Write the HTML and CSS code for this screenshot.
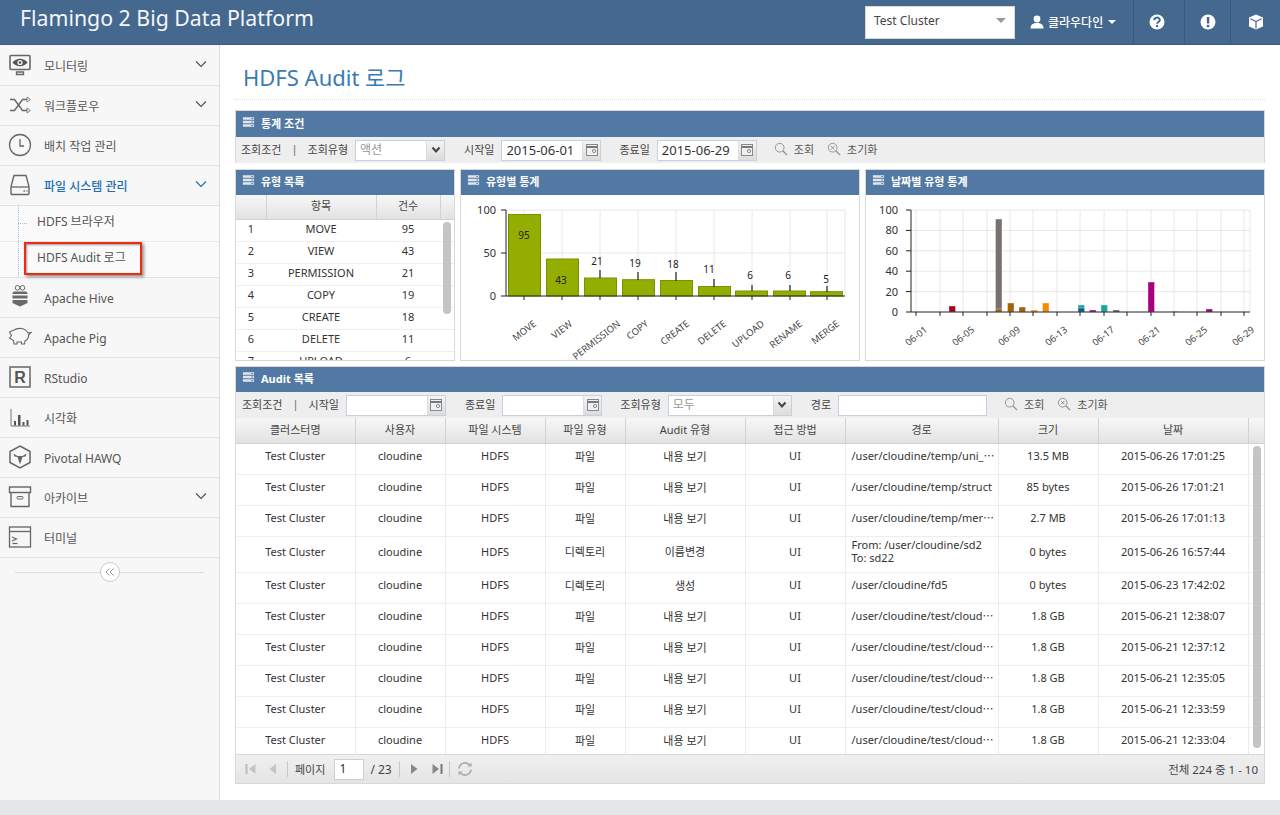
FILE: index.html
```html
<!DOCTYPE html>
<html lang="ko">
<head>
<meta charset="utf-8">
<title>HDFS Audit 로그</title>
<link rel="stylesheet" href="styles.css">
</head>
<body>
<svg class="sprite" xmlns="http://www.w3.org/2000/svg">
  <symbol id="i-head" viewBox="0 0 14 12"><path d="M1 1h12v2.600H1zM1 4.700h12v2.600H1zM1 8.400h12V11H1z" fill="#dfe6ee"/><path d="M10 2.300h2M10 6h2M10 9.700h2" stroke="#5279a3"/></symbol>
  <symbol id="i-chev" viewBox="0 0 12 8"><path d="M1 1.500l5 5 5-5" fill="none" stroke="currentColor" stroke-width="1.200"/></symbol>
  <symbol id="i-cal" viewBox="0 0 14 14"><rect x="1.500" y="1.500" width="11" height="11" fill="#eef1f4" stroke="#888"/><path d="M1.500 4h11" stroke="#777" stroke-width="2"/><circle cx="9" cy="8" r="1.600" fill="none" stroke="#888"/></symbol>
  <symbol id="i-down" viewBox="0 0 10 8"><path d="M1.500 1.500L5 5.500l3.500-4" fill="none" stroke="#444" stroke-width="2"/></symbol>
  <symbol id="i-search" viewBox="0 0 16 16"><circle cx="6.500" cy="6.500" r="5" fill="none" stroke="#8a8a8a"/><path d="M10 10l5 5" stroke="#8a8a8a" stroke-width="1.300"/></symbol>
  <symbol id="i-reset" viewBox="0 0 16 16"><circle cx="6.500" cy="6.500" r="5" fill="none" stroke="#8a8a8a"/><path d="M10 10l5 5" stroke="#8a8a8a" stroke-width="1.300"/><path d="M4.500 4.500l4 4M8.500 4.500l-4 4" stroke="#8a8a8a"/></symbol>
</svg>

<header class="topbar">
  <div class="brand">Flamingo 2 Big Data Platform</div>
  <div class="cluster"><span>Test Cluster</span><i class="caret-gray"></i></div>
  <div class="user">
    <svg class="user-icon" viewBox="0 0 14 14"><circle cx="7" cy="4" r="3.400" fill="#fff"/><path d="M0.500 13.500c0-4 2.500-5.500 6.500-5.500s6.500 1.500 6.500 5.500z" fill="#fff"/></svg>
    <span>클라우다인</span><i class="caret-white"></i>
  </div>
  <div class="tbtn tbtn-help"><svg viewBox="0 0 16 16"><circle cx="8" cy="8" r="7.500" fill="#fff"/><path d="M5.300 6.200c0-3.400 5.500-3.400 5.500-.2 0 2-2.700 1.900-2.700 3.700" fill="none" stroke="#45688f" stroke-width="2"/><rect x="7" y="11" width="2.100" height="2.100" fill="#45688f"/></svg></div>
  <div class="tbtn tbtn-alert"><svg viewBox="0 0 16 16"><circle cx="8" cy="8" r="7.500" fill="#fff"/><rect x="6.800" y="3" width="2.500" height="6.500" fill="#45688f"/><rect x="6.800" y="10.800" width="2.500" height="2.400" fill="#45688f"/></svg></div>
  <div class="tbtn tbtn-cube"><svg viewBox="0 0 16 16"><path d="M8 .5l7 3v9l-7 3-7-3v-9z" fill="#fff"/><path d="M8 7.500v7M8 7.500L2.300 4.800M8 7.500l5.700-2.700" stroke="#45688f" stroke-width="1.200" fill="none"/></svg></div>
</header>

<div class="layout">
  <nav class="sidebar">
    <a class="nav-item"><svg class="nav-icon" viewBox="0 0 24 24"><rect x="2" y="2.500" width="20" height="14" rx="1" fill="none" stroke="#666" stroke-width="1.600"/><path d="M4.500 9.500c4-5 11-5 15 0-4 5-11 5-15 0z" fill="#555"/><circle cx="12" cy="9.500" r="2.600" fill="#f7f7f7"/><circle cx="12" cy="9.500" r="1.300" fill="#555"/><path d="M8.500 19h7v2.500h-7z" fill="none" stroke="#666" stroke-width="1.300"/></svg><span class="nav-label">모니터링</span><svg class="nav-chev"><use href="#i-chev"/></svg></a>
    <a class="nav-item"><svg class="nav-icon" viewBox="0 0 24 24"><path d="M2 6.500h4.500l8 11H19M2 17.500h4.500l8-11H19" fill="none" stroke="#666" stroke-width="1.400"/><path d="M19 4l3.500 2.500L19 9zM19 15l3.500 2.500L19 20z" fill="none" stroke="#777" stroke-width=".9"/></svg><span class="nav-label">워크플로우</span><svg class="nav-chev"><use href="#i-chev"/></svg></a>
    <a class="nav-item"><svg class="nav-icon" viewBox="0 0 24 24"><circle cx="12" cy="12" r="10.500" fill="none" stroke="#666" stroke-width="1.300"/><path d="M12 6v7h4" fill="none" stroke="#666" stroke-width="1.300"/></svg><span class="nav-label">배치 작업 관리</span></a>
    <a class="nav-item nav-active"><svg class="nav-icon" viewBox="0 0 24 24"><path d="M6 2.500h12l3 11v7a1 1 0 0 1-1 1H4a1 1 0 0 1-1-1v-7z" fill="none" stroke="#666" stroke-width="1.400"/><path d="M3 14h18" stroke="#666" stroke-width="1.300"/><path d="M15.500 18h1.500M18.500 18h1" stroke="#666" stroke-width="1.300"/></svg><span class="nav-label">파일 시스템 관리</span><svg class="nav-chev"><use href="#i-chev"/></svg></a>
    <div class="subnav">
      <a class="sub-item">HDFS 브라우저</a>
      <a class="sub-item sub-current">HDFS Audit 로그<span class="callout"></span></a>
    </div>
    <a class="nav-item"><svg class="nav-icon" viewBox="0 0 24 24"><circle cx="9.500" cy="2.800" r="2.300" fill="none" stroke="#666"/><circle cx="14.500" cy="2.800" r="2.300" fill="none" stroke="#666"/><path d="M6.500 6.500h11a2 2 0 0 1 2 2v.5h-15v-.5a2 2 0 0 1 2-2zM4.500 10.500h15v3h-15zM4.500 15h15v3l-7.500 3.500L4.500 18z" fill="#6a6a6a"/></svg><span class="nav-label">Apache Hive</span></a>
    <a class="nav-item"><svg class="nav-icon" viewBox="0 0 24 24"><path d="M6 5c4-2.500 11-2.500 14 3l3-.5-2.500 2.500c.5 3-2 5.500-3.500 6l-.5 3h-3v-2H9v2H6l-.5-3.500L1.500 13l2-2.500L1.500 7z" fill="none" stroke="#666" stroke-width="1.100"/></svg><span class="nav-label">Apache Pig</span></a>
    <a class="nav-item"><svg class="nav-icon" viewBox="0 0 24 24"><rect x="2" y="2" width="20" height="20" fill="none" stroke="#666" stroke-width="1.500"/><text x="12" y="17.500" class="icon-r">R</text></svg><span class="nav-label">RStudio</span></a>
    <a class="nav-item"><svg class="nav-icon" viewBox="0 0 24 24"><path d="M3 4v17h19" fill="none" stroke="#777"/><path d="M6 16h2v4.500H6zM10 10h2.500v10.500H10zM14.500 17h2v3.500h-2zM18.500 15h2v5.500h-2z" fill="#555"/></svg><span class="nav-label">시각화</span></a>
    <a class="nav-item"><svg class="nav-icon" viewBox="0 0 24 24"><path d="M12 1l10 5.500v11L12 23 2 17.500v-11z" fill="none" stroke="#666" stroke-width="1.500"/><path d="M5.500 8.500l4 2.500h5l4-2.500-1 3-3 .5-2.500 7.500L9.500 12l-3-.5z" fill="#666"/></svg><span class="nav-label">Pivotal HAWQ</span></a>
    <a class="nav-item"><svg class="nav-icon" viewBox="0 0 24 24"><rect x="1.500" y="2" width="21" height="5.500" fill="none" stroke="#666" stroke-width="1.400"/><path d="M3 7.500v14h18v-14" fill="none" stroke="#666" stroke-width="1.400"/><rect x="9" y="11.500" width="6" height="2.500" rx="1" fill="none" stroke="#666"/></svg><span class="nav-label">아카이브</span><svg class="nav-chev"><use href="#i-chev"/></svg></a>
    <a class="nav-item"><svg class="nav-icon" viewBox="0 0 24 24"><rect x="1.500" y="2" width="21" height="20" fill="none" stroke="#666" stroke-width="1.300"/><path d="M1.500 6.500h21" stroke="#666" stroke-width="1.300"/><path d="M4 12l4.500 2L4 16" fill="none" stroke="#666" stroke-width="1.200"/><path d="M4.500 18.500h5" stroke="#666" stroke-width="1.200"/></svg><span class="nav-label">터미널</span></a>
    <div class="collapse"><span class="collapse-btn"><svg viewBox="0 0 10 10"><path d="M4.500 1.500L1 5l3.500 3.500M8.500 1.500L5 5l3.500 3.500" fill="none" stroke="#888" stroke-width=".9"/></svg></span></div>
  </nav>

  <main class="main">
    <h1 class="page-title">HDFS Audit 로그</h1>

    <section class="panel panel-cond">
      <h2 class="panel-head"><svg class="head-icon"><use href="#i-head"/></svg>통계 조건</h2>
      <div class="toolbar tb-stats">
        <span>조회조건</span><span class="pipe">|</span><span>조회유형</span>
        <div class="select select-sm"><span>액션</span><b><svg><use href="#i-down"/></svg></b></div>
        <span class="gap-19">시작일</span>
        <div class="input date"><span>2015-06-01</span><b><svg><use href="#i-cal"/></svg></b></div>
        <span class="gap-18">종료일</span>
        <div class="input date"><span>2015-06-29</span><b><svg><use href="#i-cal"/></svg></b></div>
        <span class="tool tool-first"><svg><use href="#i-search"/></svg>조회</span>
        <span class="tool"><svg><use href="#i-reset"/></svg>초기화</span>
      </div>
    </section>

    <div class="stats-row">
      <section class="panel">
        <h2 class="panel-head"><svg class="head-icon"><use href="#i-head"/></svg>유형 목록</h2>
        <div class="panel-body type-grid">
          <table class="grid grid-types">
            <colgroup><col class="c-num"><col class="c-name"><col class="c-count"><col></colgroup>
            <thead><tr><th></th><th>항목</th><th>건수</th><th></th></tr></thead>
            <tbody>
              <tr><td>1</td><td>MOVE</td><td>95</td><td></td></tr>
              <tr><td>2</td><td>VIEW</td><td>43</td><td></td></tr>
              <tr><td>3</td><td>PERMISSION</td><td>21</td><td></td></tr>
              <tr><td>4</td><td>COPY</td><td>19</td><td></td></tr>
              <tr><td>5</td><td>CREATE</td><td>18</td><td></td></tr>
              <tr><td>6</td><td>DELETE</td><td>11</td><td></td></tr>
              <tr><td>7</td><td>UPLOAD</td><td>6</td><td></td></tr>
            </tbody>
          </table>
          <span class="thumb thumb-types"></span>
        </div>
      </section>

      <section class="panel">
        <h2 class="panel-head"><svg class="head-icon"><use href="#i-head"/></svg>유형별 통계</h2>
        <div class="panel-body">
          <svg class="chart" viewBox="461 195 398 165">
            <g class="gridlines">
              <path d="M506 210H845M506 253H845"/>
              <path d="M524 210V296M562 210V296M600 210V296M638 210V296M676 210V296M714 210V296M752 210V296M790 210V296M827 210V296M845 210V296"/>
            </g>
            <g class="bars">
              <rect x="508.500" y="214.500" width="32" height="81.500"/>
              <rect x="546.500" y="259" width="32" height="37"/>
              <rect x="584.500" y="278" width="32" height="18"/>
              <rect x="622.500" y="279.700" width="32" height="16.300"/>
              <rect x="660.500" y="280.500" width="32" height="15.500"/>
              <rect x="698.500" y="286.500" width="32" height="9.500"/>
              <rect x="735.500" y="291" width="32" height="5"/>
              <rect x="773.500" y="291" width="32" height="5"/>
              <rect x="810.500" y="291.700" width="32" height="4.300"/>
            </g>
            <path class="axis" d="M506 210V296H845M501 210H506M501 253H506M501 296H506M524 296V300M562 296V300M600 296V300M638 296V300M676 296V300M714 296V300M752 296V300M790 296V300M827 296V300"/>
            <path class="leader" d="M600 270V278M638 272V280M676 272V281M714 279V287M752 285V291M790 285V291M827 286V292"/>
            <g class="ylabels">
              <text x="496" y="214">100</text><text x="496" y="257">50</text><text x="496" y="300">0</text>
            </g>
            <g class="vlabels">
              <text x="524" y="239">95</text><text x="561" y="284">43</text><text x="597" y="265">21</text><text x="635" y="267">19</text><text x="673" y="268">18</text><text x="709" y="273">11</text><text x="750" y="279">6</text><text x="788" y="279">6</text><text x="826" y="283">5</text>
            </g>
            <g class="xlabels">
              <text transform="translate(537 325) rotate(-38)">MOVE</text>
              <text transform="translate(573 325) rotate(-38)">VIEW</text>
              <text transform="translate(621 325) rotate(-38)">PERMISSION</text>
              <text transform="translate(649 325) rotate(-38)">COPY</text>
              <text transform="translate(690 325) rotate(-38)">CREATE</text>
              <text transform="translate(727 325) rotate(-38)">DELETE</text>
              <text transform="translate(765 325) rotate(-38)">UPLOAD</text>
              <text transform="translate(803 325) rotate(-38)">RENAME</text>
              <text transform="translate(840 325) rotate(-38)">MERGE</text>
            </g>
          </svg>
        </div>
      </section>

      <section class="panel">
        <h2 class="panel-head"><svg class="head-icon"><use href="#i-head"/></svg>날짜별 유형 통계</h2>
        <div class="panel-body">
          <svg class="chart" viewBox="866 195 398 165">
            <g class="gridlines">
              <path d="M911 210H1250M911 230.400H1250M911 250.800H1250M911 271.200H1250M911 291.600H1250M1250 210V312"/>
              <path d="M916 210V312M940 210V312M963 210V312M987 210V312M1010 210V312M1033 210V312M1057 210V312M1080 210V312M1104 210V312M1127 210V312M1151 210V312M1174 210V312M1197 210V312M1221 210V312M1244 210V312"/>
            </g>
            <g class="minibars">
              <rect x="949" y="306" width="6.500" height="6" fill="#a8001e"/>
              <rect x="995.500" y="219" width="6.500" height="93" fill="#7b7070"/>
              <rect x="995.500" y="309" width="6.500" height="3" fill="#a8620a"/>
              <rect x="1007.500" y="303" width="6.500" height="9" fill="#a46406"/>
              <rect x="1019" y="307" width="6.500" height="5" fill="#a46406"/>
              <rect x="1031" y="310" width="6.500" height="2" fill="#f38b00"/>
              <rect x="1042.500" y="303" width="6.500" height="9" fill="#f38b00"/>
              <rect x="1078" y="305" width="6.500" height="7" fill="#17a79a"/>
              <rect x="1078" y="308" width="6.500" height="4" fill="#0d5c9c"/>
              <rect x="1089.500" y="310" width="6.500" height="2" fill="#a8007f"/>
              <rect x="1101" y="305" width="6.500" height="7" fill="#17a79a"/>
              <rect x="1113" y="310" width="6.500" height="2" fill="#56606a"/>
              <rect x="1148" y="282" width="6.500" height="30" fill="#a8007f"/>
              <rect x="1171.500" y="311" width="6.500" height="1" fill="#f3b070"/>
              <rect x="1206" y="309" width="6.500" height="3" fill="#8c0a80"/>
            </g>
            <path class="axis" d="M911 210V312H1250M906 210H911M906 230.400H911M906 250.800H911M906 271.200H911M906 291.600H911M906 312H911M916 312V316M940 312V316M963 312V316M987 312V316M1010 312V316M1033 312V316M1057 312V316M1080 312V316M1104 312V316M1127 312V316M1151 312V316M1174 312V316M1197 312V316M1221 312V316M1244 312V316"/>
            <g class="ylabels">
              <text x="898" y="214">100</text><text x="898" y="234.400">80</text><text x="898" y="254.800">60</text><text x="898" y="275.200">40</text><text x="898" y="295.600">20</text><text x="898" y="316">0</text>
            </g>
            <g class="xlabels">
              <text transform="translate(928 331) rotate(-38)">06-01</text>
              <text transform="translate(975 331) rotate(-38)">06-05</text>
              <text transform="translate(1021 331) rotate(-38)">06-09</text>
              <text transform="translate(1068 331) rotate(-38)">06-13</text>
              <text transform="translate(1115 331) rotate(-38)">06-17</text>
              <text transform="translate(1161 331) rotate(-38)">06-21</text>
              <text transform="translate(1208 331) rotate(-38)">06-25</text>
              <text transform="translate(1255 331) rotate(-38)">06-29</text>
            </g>
          </svg>
        </div>
      </section>
    </div>

    <section class="panel panel-audit">
      <h2 class="panel-head"><svg class="head-icon"><use href="#i-head"/></svg>Audit 목록</h2>
      <div class="toolbar tb-audit">
        <span>조회조건</span><span class="pipe">|</span><span>시작일</span>
        <div class="input date"><span></span><b><svg><use href="#i-cal"/></svg></b></div>
        <span class="gap-19">종료일</span>
        <div class="input date"><span></span><b><svg><use href="#i-cal"/></svg></b></div>
        <span class="gap-18">조회유형</span>
        <div class="select select-lg"><span>모두</span><b><svg><use href="#i-down"/></svg></b></div>
        <span class="gap-19">경로</span>
        <div class="input path"></div>
        <span class="tool tool-first"><svg><use href="#i-search"/></svg>조회</span>
        <span class="tool"><svg><use href="#i-reset"/></svg>초기화</span>
      </div>
      <div class="audit-grid">
        <table class="grid grid-audit">
          <colgroup><col class="w119"><col class="w90"><col class="w100"><col class="w80"><col class="w120"><col class="w100"><col class="w153"><col class="w100"><col class="w150"><col></colgroup>
          <thead><tr><th>클러스터명</th><th>사용자</th><th>파일 시스템</th><th>파일 유형</th><th>Audit 유형</th><th>접근 방법</th><th>경로</th><th>크기</th><th>날짜</th><th></th></tr></thead>
          <tbody>
            <tr><td>Test Cluster</td><td>cloudine</td><td>HDFS</td><td>파일</td><td>내용 보기</td><td>UI</td><td class="path-cell">/user/cloudine/temp/uni_⋯</td><td>13.5 MB</td><td>2015-06-26 17:01:25</td><td></td></tr>
            <tr><td>Test Cluster</td><td>cloudine</td><td>HDFS</td><td>파일</td><td>내용 보기</td><td>UI</td><td class="path-cell">/user/cloudine/temp/struct</td><td>85 bytes</td><td>2015-06-26 17:01:21</td><td></td></tr>
            <tr><td>Test Cluster</td><td>cloudine</td><td>HDFS</td><td>파일</td><td>내용 보기</td><td>UI</td><td class="path-cell">/user/cloudine/temp/mer⋯</td><td>2.7 MB</td><td>2015-06-26 17:01:13</td><td></td></tr>
            <tr class="row-tall"><td>Test Cluster</td><td>cloudine</td><td>HDFS</td><td>디렉토리</td><td>이름변경</td><td>UI</td><td class="path-cell">From: /user/cloudine/sd2<br>To: sd22</td><td>0 bytes</td><td>2015-06-26 16:57:44</td><td></td></tr>
            <tr><td>Test Cluster</td><td>cloudine</td><td>HDFS</td><td>디렉토리</td><td>생성</td><td>UI</td><td class="path-cell">/user/cloudine/fd5</td><td>0 bytes</td><td>2015-06-23 17:42:02</td><td></td></tr>
            <tr><td>Test Cluster</td><td>cloudine</td><td>HDFS</td><td>파일</td><td>내용 보기</td><td>UI</td><td class="path-cell">/user/cloudine/test/cloud⋯</td><td>1.8 GB</td><td>2015-06-21 12:38:07</td><td></td></tr>
            <tr><td>Test Cluster</td><td>cloudine</td><td>HDFS</td><td>파일</td><td>내용 보기</td><td>UI</td><td class="path-cell">/user/cloudine/test/cloud⋯</td><td>1.8 GB</td><td>2015-06-21 12:37:12</td><td></td></tr>
            <tr><td>Test Cluster</td><td>cloudine</td><td>HDFS</td><td>파일</td><td>내용 보기</td><td>UI</td><td class="path-cell">/user/cloudine/test/cloud⋯</td><td>1.8 GB</td><td>2015-06-21 12:35:05</td><td></td></tr>
            <tr><td>Test Cluster</td><td>cloudine</td><td>HDFS</td><td>파일</td><td>내용 보기</td><td>UI</td><td class="path-cell">/user/cloudine/test/cloud⋯</td><td>1.8 GB</td><td>2015-06-21 12:33:59</td><td></td></tr>
            <tr><td>Test Cluster</td><td>cloudine</td><td>HDFS</td><td>파일</td><td>내용 보기</td><td>UI</td><td class="path-cell">/user/cloudine/test/cloud⋯</td><td>1.8 GB</td><td>2015-06-21 12:33:04</td><td></td></tr>
          </tbody>
        </table>
        <span class="thumb thumb-audit"></span>
      </div>
      <div class="pager">
        <svg class="pg pg-first" viewBox="0 0 12 12"><path d="M1.500 1v10" stroke="#bbb" stroke-width="2"/><path d="M10.500 1L4 6l6.500 5z" fill="#c4c4c4"/></svg>
        <svg class="pg pg-prev" viewBox="0 0 12 12"><path d="M9 1L2.500 6 9 11z" fill="#c4c4c4"/></svg>
        <i class="sep sep-a"></i>
        <span class="pg-label">페이지</span>
        <span class="pg-input">1</span>
        <span class="pg-total">/ 23</span>
        <i class="sep sep-b"></i>
        <svg class="pg pg-next" viewBox="0 0 12 12"><path d="M3 1l6.500 5L3 11z" fill="#888"/></svg>
        <svg class="pg pg-last" viewBox="0 0 12 12"><path d="M1.500 1L8 6l-6.500 5z" fill="#888"/><path d="M10.500 1v10" stroke="#777" stroke-width="2"/></svg>
        <i class="sep sep-c"></i>
        <svg class="pg pg-refresh" viewBox="0 0 16 16"><path d="M2 7.500A6 6 0 0 1 12.500 4M14 8.500A6 6 0 0 1 3.500 12" fill="none" stroke="#aaa" stroke-width="1.600"/><path d="M10.500 5.500h4v-4zM5.500 10.500h-4v4z" fill="#aaa"/></svg>
        <span class="pg-summary">전체 224 중 1 - 10</span>
      </div>
    </section>
  </main>
</div>
<div class="foot"></div>
</body>
</html>
```

FILE: styles.css
```css
* { box-sizing: border-box; }
html, body { margin: 0; padding: 0; }
body {
  width: 1280px;
  height: 815px;
  overflow: hidden;
  display: flex;
  flex-direction: column;
  background: #fff;
  color: #333;
  font-family: "Noto Sans", "Noto Sans CJK KR", sans-serif;
  font-size: 12px;
}
.sprite { display: none; }

/* top bar */
.topbar {
  flex: 0 0 45px;
  display: flex;
  align-items: stretch;
  background: #45688f;
  color: #fff;
  border-bottom: 1px solid #3c5d83;
}
.brand {
  width: 865px;
  padding: 3px 0 0 20px;
  font-size: 21.300px;
  line-height: 30px;
  color: #f4f6f9;
}
.cluster {
  width: 150px;
  height: 33px;
  margin-top: 6px;
  padding: 0 8px;
  display: flex;
  align-items: center;
  justify-content: space-between;
  background: #fff;
  border: 1px solid #d8d8d8;
  color: #444;
  font-size: 12px;
}
.cluster span { margin-top: -4px; }
.caret-gray {
  width: 0; height: 0;
  margin: -4px 0 0 0;
  border: 5px solid transparent;
  border-top: 5px solid #999;
  border-bottom: 0;
}
.user {
  width: 119px;
  padding-left: 15px;
  display: flex;
  align-items: center;
  font-size: 12px;
  font-weight: 500;
  border-right: 1px solid #385a80;
}
.user-icon { width: 14px; height: 14px; margin-right: 4px; }
.caret-white {
  width: 0; height: 0;
  margin-left: 5px;
  border: 4px solid transparent;
  border-top: 4px solid #fff;
  border-bottom: 0;
}
.tbtn {
  display: flex;
  align-items: center;
  justify-content: center;
  border-right: 1px solid #385a80;
}
.tbtn svg { width: 16px; height: 16px; }
.tbtn-help { width: 51px; padding-right: 4px; }
.tbtn-alert { width: 46px; }
.tbtn-cube { width: 49px; border-right: 0; }

/* layout */
.layout { flex: 0 0 755px; display: flex; }
.foot { flex: 1; background: #e4e6e9; }

/* sidebar */
.sidebar {
  width: 220px;
  padding-top: 1px;
  background: #f7f7f7;
  border-right: 1px solid #dcdcdc;
}
.nav-item {
  height: 40px;
  display: flex;
  align-items: center;
  padding: 0 10px 0 8px;
  border-bottom: 1px solid #e3e3e3;
  color: #555;
  font-size: 12px;
}
.nav-icon { width: 24px; height: 24px; flex: none; margin-top: -1px; }
.nav-label { flex: 1; margin-left: 12px; margin-top: 1px; }
.nav-chev { width: 12px; height: 8px; margin-right: 2px; margin-top: -4px; color: #555; }
.nav-active { color: #1d6fb5; font-weight: 500; background: #f7f7f7; }
.nav-active .nav-chev { color: #1d6fb5; }
.subnav {
  height: 72px;
  border-bottom: 1px solid #e3e3e3;
  background: #fafafa;
  position: relative;
}
.subnav::before {
  content: "";
  position: absolute;
  left: 18px; top: 0; bottom: 0;
  border-left: 1px dotted #9fc0e0;
}
.sub-item {
  display: block;
  position: relative;
  height: 36px;
  padding-left: 37px;
  line-height: 32px;
  color: #555;
  font-size: 12px;
}
.sub-item:first-child { border-bottom: 1px dotted #ddd; }
.sub-item::before {
  content: "";
  position: absolute;
  left: 18px; top: 17px;
  width: 9px;
  border-top: 1px dotted #9fc0e0;
}
.sub-current::before { display: none; }
.callout {
  position: absolute;
  left: 24px; top: 0;
  width: 118px; height: 33px;
  border: 2px solid #ee2b10;
  box-shadow: 2px 2px 3px rgba(60, 60, 60, .55), inset 1px 1px 2px rgba(60, 60, 60, .5);
}
.collapse {
  position: relative;
  height: 28px;
  display: flex;
  align-items: center;
  justify-content: center;
}
.collapse::before {
  content: "";
  position: absolute;
  left: 15px; right: 15px; top: 14px;
  border-top: 1px solid #ddd;
}
.collapse-btn {
  position: relative;
  width: 20px; height: 20px;
  display: flex;
  align-items: center;
  justify-content: center;
  border: 1px solid #ccc;
  border-radius: 50%;
  background: #fff;
}
.collapse-btn svg { width: 10px; height: 10px; }

/* main */
.main { width: 1060px; padding: 0 15px; }
.page-title {
  height: 55px;
  margin: 0 0 11px;
  padding: 14px 0 0 8px;
  font-size: 22px;
  font-weight: 400;
  line-height: 36px;
  color: #3c7ab4;
  border-bottom: 1px dotted #ddd;
}
.panel { border: 1px solid #d8d8d8; background: #fff; }
.panel-cond { height: 53px; margin-top: -1px; border-width: 0 1px; background: #eee; border-top: 1px solid #d8d8d8; }
.panel-head {
  height: 25px;
  margin: 0;
  padding: 0 0 3px 6px;
  display: flex;
  align-items: center;
  background: #5279a3;
  color: #fff;
  font-size: 11px;
  font-weight: 700;
}
.panel-cond .panel-head { height: 26px; }
.head-icon { width: 13px; height: 12px; margin-right: 6px; margin-top: -2px; }
.stats-row {
  display: grid;
  grid-template-columns: 220px 400px 400px;
  gap: 5px;
  height: 192px;
  margin: 6px 0 5px;
}
.panel-body { position: relative; height: 165px; overflow: hidden; }
.chart { display: block; width: 398px; height: 165px; font-family: "Noto Sans", sans-serif; }
.gridlines path { stroke: #e8e8e8; stroke-width: 1; fill: none; }
.bars rect { fill: #93ae00; stroke: #7a9100; stroke-width: 1; }
.minibars rect { stroke: rgba(255, 255, 255, .35); stroke-width: 1; }
.axis { fill: none; stroke: #222; stroke-width: 1; }
.leader { fill: none; stroke: #222; stroke-width: 1.200; }
.ylabels text { font-size: 11px; text-anchor: end; fill: #333; }
.vlabels text { font-size: 10px; text-anchor: middle; fill: #222; }
.xlabels text { font-size: 9.500px; text-anchor: end; fill: #444; }
.icon-r { font-family: "Liberation Sans", sans-serif; font-size: 16px; font-weight: 700; text-anchor: middle; fill: #555; }

/* toolbars */
.toolbar {
  display: flex;
  align-items: center;
  height: 26px;
  background: #eee;
  color: #444;
  white-space: nowrap;
  font-size: 11px;
}
.tb-stats { padding-left: 5px; }
.tb-audit { padding-left: 6px; }
.toolbar > span { margin-top: -3px; }
.pipe { margin: -3px 10px 0; color: #666; }
.toolbar > .pipe { margin: -3px 10px 0; }
.toolbar > .gap-18 { margin-left: 18px; }
.toolbar > .gap-19 { margin-left: 19px; }
.select, .input {
  height: 21px;
  display: flex;
  align-items: stretch;
  margin-left: 7px;
  background: #fff;
  border: 1px solid #c8d0de;
}
.select span { flex: 1; padding-left: 4px; line-height: 18px; font-size: 12px; color: #999; }
.select b { width: 18px; display: flex; align-items: center; justify-content: center; background: linear-gradient(#f4f4f4, #dcdcdc); border-left: 1px solid #ddd; }
.select b svg { width: 10px; height: 8px; }
.select-sm { width: 90px; }
.select-lg { width: 124px; }
.input span { flex: 1; padding-left: 4px; line-height: 19px; font-size: 13px; color: #333; }
.input b { width: 18px; display: flex; align-items: center; justify-content: center; background: linear-gradient(#f4f4f4, #dcdcdc); border-left: 1px solid #ddd; }
.input b svg { width: 14px; height: 14px; }
.date { width: 100px; }
.path { width: 149px; }
.toolbar > .tool { display: inline-flex; align-items: center; margin-left: 13px; color: #555; }
.toolbar > .tool-first { margin-left: 17px; }
.tool svg { width: 14px; height: 14px; margin-right: 6px; }

/* grids */
.grid {
  width: 100%;
  table-layout: fixed;
  border-collapse: collapse;
  font-size: 11px;
}
.grid th {
  padding: 0 0 4px;
  font-weight: 400;
  color: #444;
  background: linear-gradient(#f7f7f7, #e2e2e2);
  border-right: 1px solid #d2d2d2;
  border-bottom: 1px solid #d2d2d2;
}
.grid th:last-child { border-right: 0; }
.grid td {
  padding: 0 5px 6px;
  text-align: center;
  white-space: nowrap;
  overflow: hidden;
  color: #333;
  border-bottom: 1px solid #eee;
}
.grid-audit th { padding-bottom: 2px; }
.grid-types thead tr { height: 24px; }
.grid-types tbody tr { height: 22px; }
.grid-types td { padding-bottom: 3px; }
.c-num { width: 30px; }
.c-name { width: 110px; }
.c-count { width: 64px; }
.thumb {
  position: absolute;
  width: 8px;
  background: #c4c4c4;
  border-radius: 4px;
}
.thumb-types { left: 207px; top: 27px; height: 92px; }

.panel-audit { height: 418px; display: flex; flex-direction: column; }
.audit-grid { position: relative; height: 336px; overflow: hidden; }
.grid-audit thead tr { height: 25px; }
.grid-audit tbody tr { height: 31px; }
.grid-audit tbody tr.row-tall { height: 36px; }
.grid-audit td { border-right: 1px solid #ececec; }
.grid-audit td:last-child { border-right: 0; }
.grid-audit .path-cell { text-align: left; padding-left: 6px; line-height: 13px; }
.w119 { width: 119px; }
.w120 { width: 120px; }
.w90 { width: 90px; }
.w100 { width: 100px; }
.w80 { width: 80px; }
.w153 { width: 153px; }
.w150 { width: 150px; }
.thumb-audit { left: 1017px; top: 28px; height: 302px; }

/* pager */
.pager {
  flex: 1;
  display: flex;
  align-items: center;
  padding-left: 8px;
  background: linear-gradient(#f0f0f0, #e4e4e4);
  border-top: 1px solid #d8d8d8;
  color: #444;
  font-size: 11px;
}
.pg { width: 12px; height: 12px; }
.pg-first { margin-left: 1px; }
.pg-refresh { width: 16px; height: 16px; margin-left: 7px; }
.pg-prev { margin-left: 10px; }
.sep { width: 1px; height: 16px; background: #c8c8c8; }
.sep-a { margin-left: 8px; }
.sep-b { margin-left: 7px; }
.sep-c { margin-left: 6px; }
.pg-label { margin-left: 7px; }
.pg-input {
  width: 30px; height: 21px;
  margin-left: 9px;
  padding-left: 4px;
  background: #fff;
  border: 1px solid #c8d0de;
  font-size: 12px;
  line-height: 17px;
  color: #333;
}
.pg-total { margin-left: 6px; font-size: 12px; }
.pg-next { margin-left: 8px; }
.pg-last { margin-left: 11px; }
.pg-summary { margin-left: auto; margin-right: 6px; font-size: 11.500px; }
```
